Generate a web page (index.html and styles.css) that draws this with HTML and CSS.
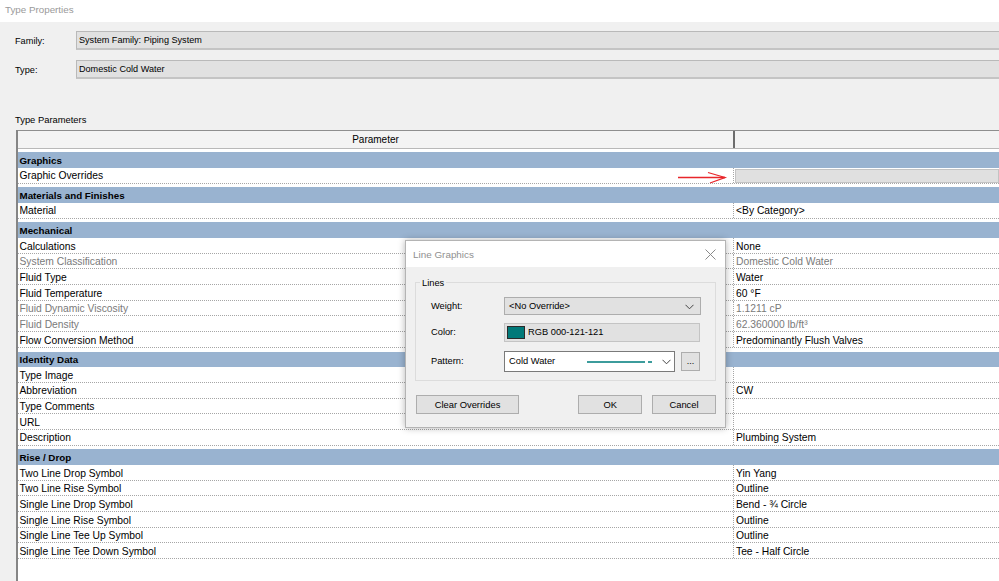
FILE: index.html
```html
<!DOCTYPE html>
<html>
<head>
<meta charset="utf-8">
<link rel="stylesheet" href="styles.css">
</head>
<body>
<div class="titlebar">Type Properties</div>
<div class="main">
  <div class="field-row first"><span class="flabel">Family:</span><div class="fbox">System Family: Piping System</div></div>
  <div class="field-row"><span class="flabel">Type:</span><div class="fbox">Domestic Cold Water</div></div>
  <div class="tp-label">Type Parameters</div>
  <div class="table">
    <div class="thead"><div class="th1">Parameter</div><div class="th2"></div></div>

    <div class="group"><div class="gband">Graphics</div></div>
    <div class="row"><div class="c1">Graphic Overrides</div><div class="c2"><div class="btnbar"></div></div></div>

    <div class="group"><div class="gband">Materials and Finishes</div></div>
    <div class="row"><div class="c1">Material</div><div class="c2">&lt;By Category&gt;</div></div>

    <div class="group"><div class="gband">Mechanical</div></div>
    <div class="row"><div class="c1">Calculations</div><div class="c2">None</div></div>
    <div class="row dim"><div class="c1">System Classification</div><div class="c2">Domestic Cold Water</div></div>
    <div class="row"><div class="c1">Fluid Type</div><div class="c2">Water</div></div>
    <div class="row"><div class="c1">Fluid Temperature</div><div class="c2">60 °F</div></div>
    <div class="row dim"><div class="c1">Fluid Dynamic Viscosity</div><div class="c2">1.1211 cP</div></div>
    <div class="row dim"><div class="c1">Fluid Density</div><div class="c2">62.360000 lb/ft³</div></div>
    <div class="row"><div class="c1">Flow Conversion Method</div><div class="c2">Predominantly Flush Valves</div></div>

    <div class="group"><div class="gband">Identity Data</div></div>
    <div class="row"><div class="c1">Type Image</div><div class="c2"></div></div>
    <div class="row"><div class="c1">Abbreviation</div><div class="c2">CW</div></div>
    <div class="row"><div class="c1">Type Comments</div><div class="c2"></div></div>
    <div class="row"><div class="c1">URL</div><div class="c2"></div></div>
    <div class="row"><div class="c1">Description</div><div class="c2">Plumbing System</div></div>

    <div class="group"><div class="gband">Rise / Drop</div></div>
    <div class="row"><div class="c1">Two Line Drop Symbol</div><div class="c2">Yin Yang</div></div>
    <div class="row"><div class="c1">Two Line Rise Symbol</div><div class="c2">Outline</div></div>
    <div class="row"><div class="c1">Single Line Drop Symbol</div><div class="c2">Bend - ¾ Circle</div></div>
    <div class="row"><div class="c1">Single Line Rise Symbol</div><div class="c2">Outline</div></div>
    <div class="row"><div class="c1">Single Line Tee Up Symbol</div><div class="c2">Outline</div></div>
    <div class="row"><div class="c1">Single Line Tee Down Symbol</div><div class="c2">Tee - Half Circle</div></div>
    <div class="table-fill"></div>
  </div>
</div>

<svg class="arrow" width="52" height="16" viewBox="0 0 52 16">
  <path d="M2 7.5 H49" stroke="#e8262b" stroke-width="1.3" fill="none"/>
  <path d="M32 2.5 L49 7.5 L34 13" stroke="#e8262b" stroke-width="1.3" fill="none"/>
</svg>

<div class="dialog">
  <div class="dtitle"><span>Line Graphics</span>
    <svg class="dclose" width="11" height="11" viewBox="0 0 11 11"><path d="M0.5 0.5 L10.5 10.5 M10.5 0.5 L0.5 10.5" stroke="#8a8a8a" stroke-width="1" fill="none"/></svg>
  </div>
  <div class="dbody">
    <div class="gbox">
      <span class="glegend">Lines</span>
      <div class="drow r1">
        <span class="dlabel">Weight:</span>
        <div class="combo grey"><span>&lt;No Override&gt;</span>
          <svg class="chev" width="9" height="6" viewBox="0 0 9 6"><path d="M0.5 0.8 L4.5 4.8 L8.5 0.8" stroke="#444" stroke-width="1" fill="none"/></svg>
        </div>
      </div>
      <div class="drow r2">
        <span class="dlabel">Color:</span>
        <div class="colorbox"><span class="swatch"></span><span>RGB 000-121-121</span></div>
      </div>
      <div class="drow r3">
        <span class="dlabel">Pattern:</span>
        <div class="combo white"><span>Cold Water</span>
          <span class="pline"></span><span class="pdash"></span>
          <svg class="chev" width="9" height="6" viewBox="0 0 9 6"><path d="M0.5 0.8 L4.5 4.8 L8.5 0.8" stroke="#444" stroke-width="1" fill="none"/></svg>
        </div>
        <div class="dots">...</div>
      </div>
    </div>
    <div class="btnrow">
      <div class="btn clear">Clear Overrides</div>
      <div class="spacer"></div>
      <div class="btn ok">OK</div>
      <div class="btn cancel">Cancel</div>
    </div>
  </div>
</div>
</body>
</html>
```

FILE: styles.css
```css
html, body {
  margin: 0;
  padding: 0;
}
body {
  width: 999px;
  height: 581px;
  overflow: hidden;
  background: #f0f0f0;
  font-family: "Liberation Sans", Arial, sans-serif;
  color: #000;
  position: relative;
}
.titlebar {
  height: 22px;
  background: #fff;
  color: #9a9a9a;
  font-size: 9.8px;
  line-height: 19px;
  padding-left: 5px;
  box-sizing: border-box;
}
.main {
  display: flex;
  flex-direction: column;
}
.field-row {
  display: flex;
  align-items: center;
  height: 19px;
  margin-top: 10px;
}
.field-row.first {
  margin-top: 9px;
}
.flabel {
  width: 61px;
  padding-left: 15px;
  font-size: 9.2px;
}
.fbox {
  flex: 1;
  height: 19px;
  box-sizing: border-box;
  background: #e1e1e1;
  border-top: 1px solid #b9b9b9;
  border-bottom: 2px solid #c4c4c4;
  border-left: 1px solid #b9b9b9;
  font-size: 9.1px;
  line-height: 17px;
  padding-left: 2px;
}
.tp-label {
  margin-top: 34px;
  padding-left: 15px;
  font-size: 9.4px;
  line-height: 13px;
}
.table {
  margin-top: 4px;
  margin-left: 16px;
  width: 983px;
  box-sizing: border-box;
  background: #fff;
  border-left: 2px solid #858585;
  display: flex;
  flex-direction: column;
  height: 460px;
}
.thead {
  display: flex;
  height: 18.5px;
  box-sizing: border-box;
  border-top: 1px solid #8e8e8e;
  border-bottom: 1px solid #b8b8b8;
  background: #f3f3f3;
}
.th1 {
  width: 715px;
  text-align: center;
  font-size: 10px;
  line-height: 12px;
  padding-top: 3px;
}
.th2 {
  flex: 1;
  border-left: 2px solid #6c6c6c;
}
.group {
  padding-top: 3.7px;
  background: #fff;
}
.gband {
  height: 15.7px;
  background: #99b3d0;
  font-weight: bold;
  font-size: 9.8px;
  line-height: 12px;
  padding-top: 2.5px;
  box-sizing: border-box;
  padding-left: 1.5px;
}
.row {
  display: flex;
  height: 15.7px;
  box-sizing: border-box;
  border-bottom: 1px dotted #a6a6a6;
  font-size: 10.3px;
  line-height: 12px;
}
.row .c1 {
  width: 715px;
  padding-left: 1.5px;
  padding-top: 2.5px;
  box-sizing: border-box;
  white-space: nowrap;
}
.row .c2 {
  flex: 1;
  border-left: 1px dotted #a6a6a6;
  padding-left: 2px;
  padding-top: 2.5px;
  white-space: nowrap;
  position: relative;
}
.row.dim {
  color: #7a7a7a;
}
.btnbar {
  position: absolute;
  left: 1px;
  top: 1px;
  right: 0;
  bottom: 0;
  background: #e0e0e0;
  border: 1px solid #c3c3c3;
}
.table-fill {
  flex: 1;
  background: #fff;
}
.arrow {
  position: absolute;
  left: 676px;
  top: 170px;
}
.dialog {
  position: absolute;
  left: 405px;
  top: 240px;
  width: 321px;
  height: 188px;
  box-sizing: border-box;
  border: 1px solid #b4b4b4;
  background: #f0f0f0;
  box-shadow: 0 0 7px rgba(0, 0, 0, 0.3);
  display: flex;
  flex-direction: column;
}
.dtitle {
  height: 26px;
  background: #fff;
  display: flex;
  align-items: center;
  justify-content: space-between;
  padding: 0 9px 0 7px;
  color: #8f8f8f;
  font-size: 9.9px;
}
.dbody {
  padding: 0 9px;
  display: flex;
  flex-direction: column;
}
.gbox {
  margin-top: 15.3px;
  height: 98.4px;
  box-sizing: border-box;
  border: 1px solid #dcdcdc;
  position: relative;
  padding: 13.4px 0 0 15px;
  display: flex;
  flex-direction: column;
}
.glegend {
  position: absolute;
  left: 4px;
  top: -5px;
  padding: 0 2px;
  background: #f0f0f0;
  font-size: 9.3px;
  line-height: 11px;
}
.drow {
  display: flex;
  align-items: center;
  font-size: 9.3px;
}
.drow.r1 { height: 18.3px; }
.drow.r2 { height: 18.4px; margin-top: 8.3px; }
.drow.r3 { height: 20.7px; margin-top: 9.3px; }
.dlabel {
  width: 73px;
}
.combo {
  height: 100%;
  box-sizing: border-box;
  display: flex;
  align-items: center;
  padding-left: 4px;
  position: relative;
}
.combo.grey {
  width: 197px;
  background: #e1e1e1;
  border: 1px solid #adadad;
}
.combo.white {
  width: 171px;
  background: #fff;
  border: 1px solid #7a7a7a;
}
.combo .chev {
  position: absolute;
  right: 6px;
  top: 50%;
  margin-top: -2px;
}
.combo.white .chev {
  right: 3px;
}
.pline {
  position: absolute;
  left: 82px;
  top: 50%;
  width: 58px;
  height: 1.5px;
  background: #3c9c9c;
}
.pdash {
  position: absolute;
  left: 143px;
  top: 50%;
  width: 4px;
  height: 1.5px;
  background: #3c9c9c;
}
.dots {
  margin-left: 6px;
  width: 19px;
  height: 19px;
  box-sizing: border-box;
  background: #e1e1e1;
  border: 1px solid #adadad;
  text-align: center;
  font-size: 9px;
  line-height: 17px;
}
.colorbox {
  width: 196px;
  height: 100%;
  box-sizing: border-box;
  background: #e1e1e1;
  border: 1px solid #c4c4c4;
  display: flex;
  align-items: center;
  padding-left: 2px;
  gap: 3px;
}
.swatch {
  width: 18px;
  height: 13px;
  box-sizing: border-box;
  background: #007979;
  border: 1px solid #2a2a2a;
}
.btnrow {
  margin-top: 14.3px;
  display: flex;
  padding-left: 1px;
}
.btn {
  height: 19px;
  box-sizing: border-box;
  background: #e1e1e1;
  border: 1px solid #adadad;
  font-size: 9.4px;
  line-height: 17px;
  text-align: center;
}
.btn.clear { width: 103px; }
.spacer { flex: 1; }
.btn.ok { width: 64px; }
.btn.cancel { width: 64px; margin-left: 9.7px; }
```
